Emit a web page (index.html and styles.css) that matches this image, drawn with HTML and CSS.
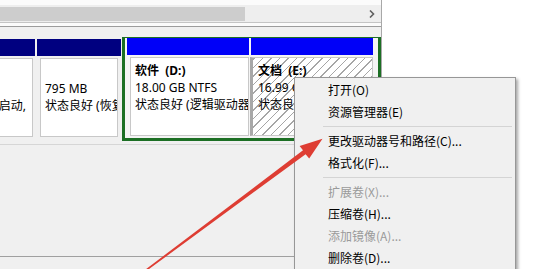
FILE: index.html
```html
<!DOCTYPE html>
<html lang="zh-CN">
<head>
  <meta charset="UTF-8">
  <meta name="viewport" content="width=device-width, initial-scale=1.0">
  <title>磁盘管理</title>
  <link rel="stylesheet" href="styles.css">
</head>
<body>
  <div class="screen">
    <div class="panel">
      <div class="scroller">
        <div class="track">
          <div class="thumb"></div>
          <svg class="chev" width="6" height="8" viewBox="0 0 6 8"><path d="M1 0.5 L4.5 4 L1 7.5" fill="none" stroke="#606060" stroke-width="1.6"/></svg>
        </div>
      </div>

      <div class="disk">
        <div class="part p1">
          <div class="bar navy"></div>
          <div class="box clip">
            <div class="line">&nbsp;</div>
            <div class="line">&nbsp;</div>
            <div class="line end">状态良好 (启动,</div>
          </div>
        </div>

        <div class="part p2">
          <div class="bar navy"></div>
          <div class="box">
            <div class="line">&nbsp;</div>
            <div class="line">795 MB</div>
            <div class="line">状态良好 (恢复分区)</div>
          </div>
        </div>

        <div class="extended">
          <div class="part pd">
            <div class="bar blue"></div>
            <div class="box">
              <div class="line name">软件 &nbsp;(D:)</div>
              <div class="line">18.00 GB NTFS</div>
              <div class="line">状态良好 (逻辑驱动器)</div>
            </div>
          </div>
          <div class="part pe">
            <div class="bar blue"></div>
            <div class="box hatched">
              <div class="line name">文档 &nbsp;(E:)</div>
              <div class="line">16.99 GB NTFS</div>
              <div class="line">状态良好 (逻辑驱动器)</div>
            </div>
          </div>
        </div>
      </div>

      <div class="lower"></div>
    </div>

    <ul class="menu">
      <li>打开(O)</li>
      <li>资源管理器(E)</li>
      <li class="sep"></li>
      <li>更改驱动器号和路径(C)...</li>
      <li>格式化(F)...</li>
      <li class="sep"></li>
      <li class="off">扩展卷(X)...</li>
      <li>压缩卷(H)...</li>
      <li class="off">添加镜像(A)...</li>
      <li>删除卷(D)...</li>
    </ul>

    <!-- red annotation arrow drawn over the screenshot -->
    <svg class="annot" width="541" height="269" viewBox="0 0 541 269">
      <polygon fill="#de3d33" points="145.4,269.6 146.6,270.8 305.6,154.2 309.2,158.6 322.5,138.8 299.6,145.9 303.0,150.3"/>
    </svg>
  </div>
</body>
</html>
```

FILE: styles.css
```css
body {
  margin: 0;
  background: #fff;
}
.screen {
  position: relative;
  width: 541px;
  height: 269px;
  overflow: hidden;
  background: #fff;
  font-family: "Noto Sans", "Noto Sans CJK SC", sans-serif;
  font-size: 12px;
  color: #000;
}
.panel {
  width: 381px;
  height: 269px;
  background: #f0f0f0;
  border-right: 1px solid #a8a8a8;
}
.scroller {
  height: 27px;
  background: #fbfbfb;
  border-bottom: 1px solid #9c9c9c;
  padding-top: 5px;
  box-sizing: border-box;
}
.track {
  display: flex;
  align-items: center;
  height: 17px;
  background: #eeeeee;
  border-bottom: 1px solid #c4c4c4;
}
.thumb {
  width: 245px;
  height: 14px;
  background: #cdcdcd;
}
.chev {
  margin-left: auto;
  margin-right: 6px;
}
.disk {
  display: flex;
  align-items: flex-start;
  height: 106px;
  padding-top: 11px;
  border-bottom: 1px solid #d6d6d6;
}
.part {
  display: flex;
  flex-direction: column;
}
.bar {
  height: 17px;
  margin-top: 1px;
}
.navy {
  background: #000080;
}
.blue {
  background: #0000f8;
}
.box {
  height: 79px;
  margin-top: 2px;
  background: #fff;
  border: 1px solid #c8c8c8;
  padding: 4px 4px;
  box-sizing: border-box;
  overflow: hidden;
  white-space: nowrap;
}
.line {
  height: 17px;
  line-height: 17px;
}
.name {
  font-weight: bold;
}
.p1 {
  width: 35px;
  margin-right: 2px;
}
.p1 .box {
  margin-right: 2px;
  border-left: none;
  padding: 4px 6px 4px 0;
}
.clip .line {
  display: flex;
  justify-content: flex-end;
}
.p2 {
  width: 84px;
  margin-right: 1px;
}
.p2 .box {
  margin: 2px 3px 0;
}
.extended {
  display: flex;
  width: 255px;
  height: 100px;
  border: 3px solid #1c6f24;
  border-top: 1px solid #1c6f24;
  margin-top: -1px;
  background: #f4f4f4;
}
.extended .bar {
  margin-top: 0;
}
.pd {
  width: 125px;
}
.pd .bar {
  margin: 0 1px 0 2px;
}
.pd .box {
  margin: 2px 1px 0 5px;
}
.pe {
  width: 124px;
}
.pe .bar {
  margin: 0 1px;
}
.pe .box {
  margin: 2px 1px 0 0;
  padding-left: 5px;
  border-left: 3px solid #a8a8a8;
  background: repeating-linear-gradient(-45deg, #fff 0 5px, #a6a6a6 5px 6px);
}
.lower {
  height: 111px;
  border-bottom: 1px solid #a0a0a0;
}
.menu {
  position: absolute;
  left: 294px;
  top: 77px;
  width: 220px;
  height: 200px;
  margin: 0;
  padding: 1px 0 0;
  list-style: none;
  background: #f0f0f0;
  border: 1px solid #979797;
  box-shadow: 2px 2px 3px rgba(0, 0, 0, 0.35);
  font-family: "Noto Sans CJK SC", sans-serif;
}
.menu li {
  height: 22px;
  line-height: 22px;
  padding-left: 33px;
}
.menu .sep {
  height: 1px;
  padding: 0;
  margin: 3px 3px 3px 28px;
  background: #d4d4d4;
}
.menu .off {
  color: #9a9a9a;
}
.annot {
  position: absolute;
  left: 0;
  top: 0;
  pointer-events: none;
}
```
